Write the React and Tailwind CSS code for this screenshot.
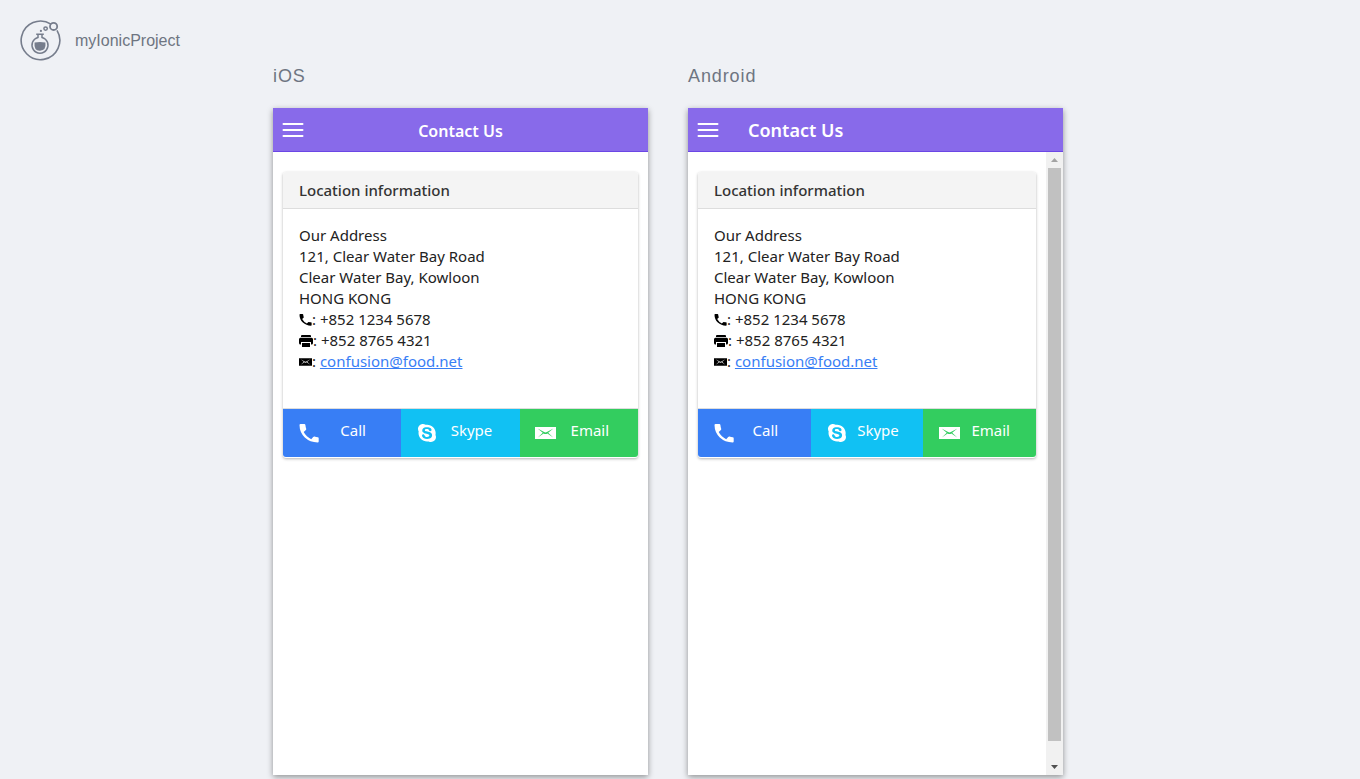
import React from "react";
import { IoLogoSkype } from "react-icons/io";

function Logo() {
  return (
    <svg className="size-[41px]" viewBox="0 0 41 41" fill="none" stroke="#767d8c" aria-hidden="true">
      <path d="M37 10.4A19.3 19.3 0 1 1 31 4.2" strokeWidth="1.6" />
      <circle cx="33.6" cy="6.4" r="3.6" strokeWidth="1.8" />
      <circle cx="25.6" cy="8.6" r="1.7" strokeWidth="1.5" />
      <circle cx="20.9" cy="10.9" r="1.1" fill="#767d8c" stroke="none" />
      <path d="M16.2 14.2h7.6M18 14v3.4a8 8 0 1 0 4 0V14" strokeWidth="1.5" />
      <path d="M14.6 22.6Q20 21.4 25.4 22.6Q26.4 30.6 20 30.8T14.6 22.6Z" fill="#767d8c" stroke="none" />
    </svg>
  );
}

function PhoneIcon({ className }) {
  return (
    <svg className={className} viewBox="0 0 20 19" fill="currentColor" aria-hidden="true">
      <path d="M1.6 0H5.3Q6.3 0 6.4 1Q6.6 3 7.2 4.7Q7.4 5.4 6.9 5.9L4.7 8.1Q7.4 13 12.2 15.2L14.2 13Q14.7 12.4 15.5 12.6Q17 13.1 18.8 13.2Q19.7 13.3 19.7 14.2V17.5Q19.7 18.5 18.7 18.5Q11 18.5 5.8 13.6Q.6 8.5 .5 1.1Q.5 0 1.6 0Z" />
    </svg>
  );
}

function PrinterIcon({ className }) {
  return (
    <svg className={className} viewBox="0 0 14 12" fill="currentColor" aria-hidden="true">
      <path d="M3 0H11Q12 0 12 1V2H2V1Q2 0 3 0Z" />
      <path d="M1.5 2.8H12.5Q14 2.8 14 4.3V8Q14 9.5 12.5 9.5H12V7H2V9.5H1.5Q0 9.5 0 8V4.3Q0 2.8 1.5 2.8Z" />
      <path d="M3 8H11V12H3Z" />
    </svg>
  );
}

function EmailIcon({ className }) {
  return (
    <svg className={className} viewBox="0 0 21 12" fill="currentColor" aria-hidden="true">
      <path
        fillRule="evenodd"
        d="M0 0H21V12H0ZM2.6 1.4L7.8 5.7L2.8 10.4L8.6 6.4Q10.5 7.8 12.4 6.4L18.2 10.4L13.2 5.7L18.4 1.4L11.9 5.1Q10.5 5.9 9.1 5.1Z"
      />
    </svg>
  );
}

function NavBar({ centered }) {
  return (
    <header className="grid h-11 grid-cols-[40px_1fr_40px] items-center border-b border-[#6b46e5] bg-[#886aea] text-white">
      <button type="button" aria-label="Menu" className="flex h-full items-center pl-2">
        <svg className="h-4 w-6" viewBox="0 0 24 16" fill="none" stroke="currentColor" strokeWidth="2" strokeLinecap="round" aria-hidden="true">
          <path d="M2.5 2h19M2.5 8h19M2.5 14h19" />
        </svg>
      </button>
      <h2 className={centered ? "pt-0.5 text-center text-[16px] font-semibold" : "pt-0.5 pl-5 text-[18px] font-semibold"}>Contact Us</h2>
    </header>
  );
}

function ActionButton({ icon, label, color }) {
  return (
    <button type="button" className={`flex flex-1 items-center pr-3.5 pl-4 text-white ${color}`}>
      <span className="flex w-5 shrink-0 justify-center">{icon}</span>
      <span className="flex-1 pb-1.5 text-center">{label}</span>
    </button>
  );
}

function ContactCard() {
  return (
    <section className="mx-2.5 mt-5 rounded-[3px] bg-white pb-px text-[15px] leading-[21px] text-[#222] shadow-[0_1px_3px_rgba(0,0,0,0.3)]">
      <h3 className="rounded-t-[3px] border-b border-[#ddd] bg-[#f4f4f4] px-4 py-2 leading-5 font-medium text-[#333]">Location information</h3>
      <div className="border-b border-[#ddd] px-4 pt-4 pb-9">
        <address className="not-italic">
          <p>Our Address</p>
          <p>121, Clear Water Bay Road</p>
          <p>Clear Water Bay, Kowloon</p>
          <p>HONG KONG</p>
          <p className="flex items-center"><PhoneIcon className="h-3 w-[13px] text-black" /><span className="whitespace-pre">: +852 1234 5678</span></p>
          <p className="flex items-center"><PrinterIcon className="h-3 w-3.5 text-black" /><span className="whitespace-pre">: +852 8765 4321</span></p>
          <p className="flex items-center">
            <EmailIcon className="h-2 w-[13px] text-black" />
            <span className="whitespace-pre">: <a href="mailto:confusion@food.net" className="text-[#387ef5] underline">confusion@food.net</a></span>
          </p>
        </address>
      </div>
      <div className="flex h-12 overflow-hidden rounded-b-[3px]">
        <ActionButton label="Call" color="bg-[#387ef5]" icon={<PhoneIcon className="h-[19px] w-5 shrink-0" />} />
        <ActionButton label="Skype" color="bg-[#11c1f3]" icon={<IoLogoSkype className="size-6 shrink-0" />} />
        <ActionButton label="Email" color="bg-[#33cd5f]" icon={<EmailIcon className="h-3 w-[21px] shrink-0" />} />
      </div>
    </section>
  );
}

function ScrollBar() {
  return (
    <div className="flex w-[17px] shrink-0 flex-col items-center bg-[#f1f1f1]" aria-hidden="true">
      <svg className="h-4 w-full" viewBox="0 0 17 16" fill="#a3a3a3"><path d="M5 10h7L8.5 6Z" /></svg>
      <div className="w-[13px] flex-1 bg-[#c1c1c1]" />
      <svg className="mt-[17px] h-[17px] w-full" viewBox="0 0 17 17" fill="#505050"><path d="M5 7h7L8.5 11Z" /></svg>
    </div>
  );
}

function Preview({ platform, centered, scrollbar }) {
  return (
    <div className="flex max-w-[375px] flex-1 flex-col">
      <h1 className="mb-5 font-['Liberation_Sans',Arial,sans-serif] text-[18px] leading-6 tracking-wider text-[#6e7581]">{platform}</h1>
      <div className="flex min-h-[667px] flex-col bg-white font-['Noto_Sans',sans-serif] shadow-[0_2px_6px_rgba(0,0,0,0.4)]">
        <NavBar centered={centered} />
        <div className="flex flex-1">
          <main className="min-w-0 flex-1">
            <ContactCard />
          </main>
          {scrollbar && <ScrollBar />}
        </div>
      </div>
    </div>
  );
}

export default function App() {
  return (
    <div className="min-h-screen bg-[#eff1f5] pb-1">
      <div className="flex items-center gap-3.5 px-5 pt-5 font-['Liberation_Sans',Arial,sans-serif] text-[16px] text-[#6e7581]">
        <Logo />
        <span>myIonicProject</span>
      </div>
      <div className="flex justify-center gap-10 pt-[3px] pr-6">
        <Preview platform="iOS" centered />
        <Preview platform="Android" scrollbar />
      </div>
    </div>
  );
}
